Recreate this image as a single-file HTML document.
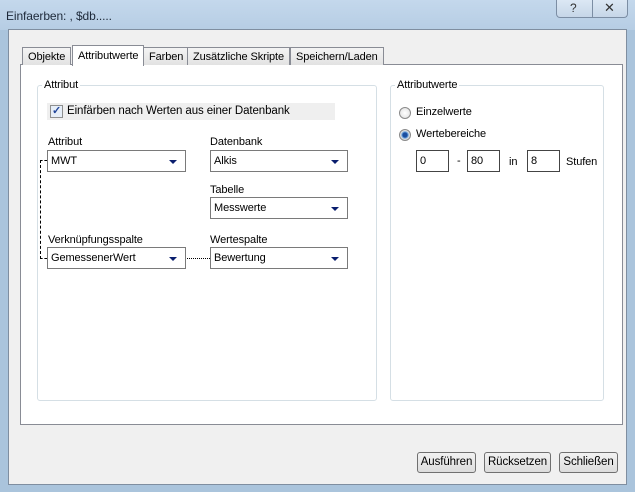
<!DOCTYPE html>
<html><head><style>
*{margin:0;padding:0;box-sizing:border-box}
body{width:635px;height:492px;background:#aac4dc;font-family:"Liberation Sans",sans-serif;font-size:11px;color:#000;position:relative;overflow:hidden;letter-spacing:-0.1px}
.a{position:absolute}
.title{left:0;top:0;width:635px;height:30px;background:linear-gradient(#c4d8ec,#b6cde4)}
.client{left:8px;top:29px;width:619px;height:456px;background:#f0f0f0;border:1px solid #7f8ea0}
.panel{left:20px;top:64px;width:603px;height:361px;background:#fff;border:1px solid #898c95}
.tab{top:47px;height:18px;border:1px solid #898c95;border-bottom:none;background:linear-gradient(#f4f4f4,#e2e2e2);padding:3px 5px 0 5px;white-space:nowrap}
.grp{border:1px solid #d5dfe5;border-radius:3px}
.lg{background:#fff;padding:0 2px}
.cb{height:22px;border:1px solid #7a7a7a;background:#fff;padding:4px 3px 0;}
.cb:after{content:"";position:absolute;right:8px;top:9px;border-left:4px solid transparent;border-right:4px solid transparent;border-top:4px solid #0a1e6e}
.in{height:22px;border:1px solid #444;background:#fff;padding:4px 3px 0}
.btn{top:452px;height:21px;border:1px solid #707070;border-radius:3px;background:linear-gradient(#f2f2f2,#dcdcdc);text-align:center;line-height:19px;font-size:11.5px}
.rad{width:12px;height:12px;border-radius:50%;border:1px solid #8a8a8a;background:radial-gradient(#fff,#ddd)}
</style></head><body>
<div class="a title"></div>
<div class="a" style="left:6px;top:9px;font-size:12px;color:#1e2a3a">Einfaerben: , $db.....</div>
<div class="a" style="left:556px;top:0;width:72px;height:18px;border:1px solid #7c8ea4;border-top:none;border-radius:0 0 4px 4px;background:linear-gradient(#dce8f4,#c6d6e8)"></div>
<div class="a" style="left:592px;top:0;width:1px;height:18px;background:#7c8ea4"></div>
<div class="a" style="left:570px;top:1px;font-size:12px;color:#333">?</div>
<div class="a" style="left:604px;top:0px;font-size:13px;color:#333">✕</div>
<div class="a client"></div>
<div class="a panel"></div>
<div class="a tab" style="left:22px">Objekte</div>
<div class="a tab" style="left:72px;top:45px;height:21px;background:#fff;padding-top:4px">Attributwerte</div>
<div class="a tab" style="left:143px">Farben</div>
<div class="a tab" style="left:187px">Zusätzliche Skripte</div>
<div class="a tab" style="left:290px">Speichern/Laden</div>

<div class="a grp" style="left:37px;top:85px;width:340px;height:316px"></div>
<div class="a lg" style="left:42px;top:79px">Attribut</div>
<div class="a" style="left:47px;top:103px;width:288px;height:17px;background:#efefef"></div>
<div class="a" style="left:50px;top:105px;width:13px;height:13px;border:1px solid #8e8f8f;background:#e6eef8;color:#21459a;font-size:11px;line-height:11px;text-align:center;font-weight:bold">✓</div>
<div class="a" style="left:67px;top:105px;font-size:11.5px">Einfärben nach Werten aus einer Datenbank</div>
<div class="a" style="left:48px;top:136px">Attribut</div>
<div class="a" style="left:210px;top:136px">Datenbank</div>
<div class="a cb" style="left:47px;top:150px;width:139px">MWT</div>
<div class="a cb" style="left:210px;top:150px;width:138px">Alkis</div>
<div class="a" style="left:210px;top:184px">Tabelle</div>
<div class="a cb" style="left:210px;top:197px;width:138px">Messwerte</div>
<div class="a" style="left:48px;top:234px">Verknüpfungsspalte</div>
<div class="a" style="left:210px;top:234px">Wertespalte</div>
<div class="a cb" style="left:47px;top:247px;width:139px">GemessenerWert</div>
<div class="a cb" style="left:210px;top:247px;width:138px">Bewertung</div>
<div class="a" style="left:40px;top:160px;width:7px;height:99px;border-left:1px dashed #000;border-top:1px dashed #000;border-bottom:1px dashed #000"></div>
<div class="a" style="left:187px;top:258px;width:23px;border-top:1px dotted #000"></div>

<div class="a grp" style="left:390px;top:85px;width:214px;height:316px"></div>
<div class="a lg" style="left:395px;top:79px">Attributwerte</div>
<div class="a rad" style="left:399px;top:107px"></div>
<div class="a" style="left:416px;top:106px">Einzelwerte</div>
<div class="a rad" style="left:399px;top:129px;background:radial-gradient(#1a4ea0 30%,#6fa6e0 45%,#ddd 60%)"></div>
<div class="a" style="left:416px;top:128px">Wertebereiche</div>
<div class="a in" style="left:416px;top:150px;width:33px">0</div>
<div class="a" style="left:457px;top:155px">-</div>
<div class="a in" style="left:467px;top:150px;width:33px">80</div>
<div class="a" style="left:509px;top:156px">in</div>
<div class="a in" style="left:527px;top:150px;width:33px">8</div>
<div class="a" style="left:566px;top:156px">Stufen</div>

<div class="a btn" style="left:417px;width:59px">Ausführen</div>
<div class="a btn" style="left:484px;width:67px">Rücksetzen</div>
<div class="a btn" style="left:559px;width:59px">Schließen</div>
</body></html>
